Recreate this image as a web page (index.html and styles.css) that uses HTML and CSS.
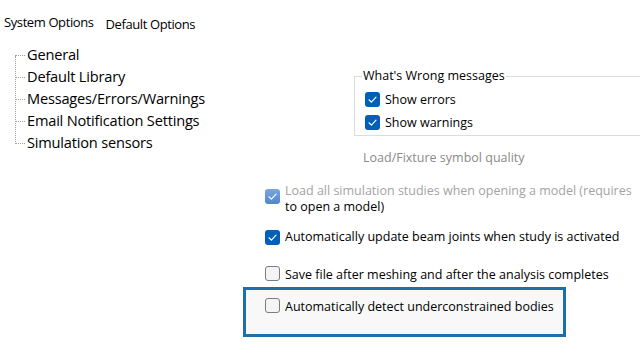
FILE: index.html
```html
<!DOCTYPE html>
<html lang="en">
<head>
<meta charset="utf-8">
<title>Simulation Options</title>
<link rel="stylesheet" href="styles.css">
</head>
<body>
<div class="page">
  <div class="tabs">
    <span class="tab active">System Options</span>
    <span class="tab">Default Options</span>
  </div>
  <div class="main">
    <nav class="tree">
      <ul class="tree-list">
        <li><span class="dots"></span>General</li>
        <li><span class="dots"></span>Default Library</li>
        <li><span class="dots"></span>Messages/Errors/Warnings</li>
        <li><span class="dots"></span>Email Notification Settings</li>
        <li><span class="dots"></span>Simulation sensors</li>
      </ul>
    </nav>
    <section class="panel">
      <fieldset class="group">
        <legend>What's Wrong messages</legend>
        <div class="grow">
          <span class="cb checked"><svg viewBox="0 0 15 15"><path d="M4 7.8 L6.4 10.1 L11 5.2"/></svg></span>
          <span>Show errors</span>
        </div>
        <div class="grow">
          <span class="cb checked"><svg viewBox="0 0 15 15"><path d="M4 7.8 L6.4 10.1 L11 5.2"/></svg></span>
          <span>Show warnings</span>
        </div>
      </fieldset>
      <div class="label-muted">Load/Fixture symbol quality</div>
      <div class="opt opt-load">
        <span class="cb checked disabled"><svg viewBox="0 0 15 15"><path d="M4 7.8 L6.4 10.1 L11 5.2"/></svg></span>
        <span class="opt-text"><span class="dim">Load all simulation studies when opening a model (requires</span><br>to open a model)</span>
      </div>
      <div class="opt opt-beam">
        <span class="cb checked"><svg viewBox="0 0 15 15"><path d="M4 7.8 L6.4 10.1 L11 5.2"/></svg></span>
        <span class="opt-text">Automatically update beam joints when study is activated</span>
      </div>
      <div class="opt opt-save">
        <span class="cb"></span>
        <span class="opt-text">Save file after meshing and after the analysis completes</span>
      </div>
      <div class="opt opt-detect highlight">
        <span class="cb"></span>
        <span class="opt-text">Automatically detect underconstrained bodies</span>
      </div>
    </section>
  </div>
</div>
</body>
</html>
```

FILE: styles.css
```css
html, body {
  margin: 0;
  padding: 0;
  background: #ffffff;
}

.page {
  width: 640px;
  height: 360px;
  overflow: hidden;
  font-family: "Open Sans", "Noto Sans", sans-serif;
  color: #000000;
}

.tabs {
  display: flex;
  align-items: flex-start;
  height: 34px;
  padding-left: 4px;
  box-sizing: border-box;
}

.tab {
  font-size: 13px;
  line-height: 20px;
  letter-spacing: -0.4px;
  padding-top: 11.5px;
}

.tab + .tab {
  margin-left: 12px;
  padding-top: 14px;
}

.main {
  display: flex;
  align-items: flex-start;
}

.tree {
  width: 243px;
  flex: none;
  margin-top: 9px;
}

.tree-list {
  position: relative;
  list-style: none;
  margin: 0;
  padding: 0 0 0 15px;
}

.tree-list::before {
  content: "";
  position: absolute;
  left: 15px;
  top: 13px;
  bottom: 9px;
  border-left: 1px dotted #a0a0a0;
}

.tree-list li {
  display: flex;
  align-items: center;
  height: 22px;
  font-size: 14.6px;
  letter-spacing: -0.2px;
  white-space: nowrap;
}

.dots {
  width: 10px;
  height: 0;
  margin-top: 3px;
  margin-right: 2px;
  border-top: 1px dotted #a0a0a0;
  flex: none;
}

.panel {
  flex: 1;
  min-width: 0;
  font-size: 12.5px;
  letter-spacing: 0;
}

.group {
  margin: 34px 0 0 111px;
  padding: 4px 0 1px 10px;
  width: 300px;
  border: 1px solid #dcdcdc;
  border-right: none;
  box-sizing: border-box;
}

.group legend {
  margin-left: -3px;
  padding: 0 1px;
  line-height: 16px;
}

.grow {
  display: flex;
  align-items: center;
  height: 23px;
  white-space: nowrap;
}

.label-muted {
  margin: 14px 0 0 120px;
  line-height: 16px;
  color: #8a8a8a;
  white-space: nowrap;
}

.opt {
  display: flex;
  align-items: center;
  padding-left: 19px;
  border: 3px solid transparent;
  line-height: 16px;
  white-space: nowrap;
}

.opt-load {
  margin-top: 14px;
  align-items: flex-start;
}

.opt-load .cb {
  margin-top: 5.5px;
}

.opt-beam {
  margin-top: 8px;
}

.opt-save {
  margin-top: 16px;
}

.opt-save .cb {
  margin-top: -4px;
}

.highlight {
  margin-top: 1px;
  width: 323px;
  height: 50px;
  box-sizing: border-box;
  align-items: flex-start;
  padding-top: 9px;
  border-color: #1d6fa7;
  background: #f8f8f8;
}

.highlight .cb {
  margin-top: -1px;
}

.dim {
  color: #a3a3a3;
}

.cb {
  flex: none;
  width: 15px;
  height: 15px;
  margin-right: 5px;
  border-radius: 3px;
  box-sizing: border-box;
  border: 1px solid #7c7c7c;
  background: #f4f4f4;
  display: flex;
  align-items: center;
  justify-content: center;
}

.cb svg {
  width: 15px;
  height: 15px;
  display: block;
}

.cb svg path {
  fill: none;
  stroke: #ffffff;
  stroke-width: 1.2;
  stroke-linecap: round;
  stroke-linejoin: round;
}

.cb.checked {
  border: none;
  background: #0060b9;
}

.cb.checked.disabled {
  background: linear-gradient(#7aa6df, #4f86cf);
}
```
